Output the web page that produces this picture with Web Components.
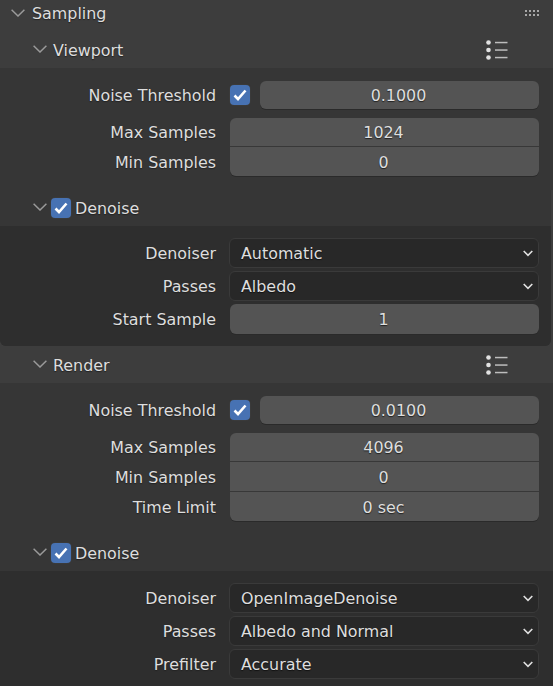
<!DOCTYPE html>
<html>
<head>
<meta charset="utf-8">
<title>Sampling</title>
<style>
  html, body {
    margin: 0;
    height: 686px;
    overflow: hidden;
    background: #3d3d3d;
    font-family: "DejaVu Sans", sans-serif;
    font-size: 15.9px;
    color: #dedede;
  }
</style>
</head>
<body>
<sampling-panel></sampling-panel>

<script>
const chevron = `<svg width="14" height="8" viewBox="0 0 14 8" fill="none" stroke="#9a9a9a" stroke-width="1.5"><path d="M.6 .8 L7 7 L13.4 .8"/></svg>`

class BlCheck extends HTMLElement {
  constructor() {
    super()
    this.attachShadow({ mode: 'open' })
    this.shadowRoot.innerHTML = `
      <style>
        :host {
          width: 20px;
          height: 20px;
          display: flex;
          align-items: center;
          justify-content: center;
          flex: none;
          background: #4772b3;
          border-radius: 4px;
          box-shadow: 0 0 0 1px #3a3a3a;
        }
      </style>
      <svg width="14" height="12" viewBox="0 0 14 12" fill="none" stroke="#fff" stroke-width="2.6">
        <path d="M1.5 6.5 L5 10 L12.5 1.5"/>
      </svg>
    `
  }
}
customElements.define('bl-check', BlCheck)

class BlHeader extends HTMLElement {
  constructor() {
    super()
    this.attachShadow({ mode: 'open' })
  }

  connectedCallback() {
    let checked = this.hasAttribute('checked')
    let list = this.hasAttribute('presets')
    this.shadowRoot.innerHTML = `
      <style>
        :host {
          display: flex;
          align-items: center;
          height: 36px;
          padding-left: 33px;
          padding-right: 45px;
          box-sizing: border-box;
        }
        span { text-shadow: 0 1px 1px #222; }
        .arrow { width: 20px; display: flex; flex: none; margin-top: -3px; }
        .check { margin-left: -2px; margin-right: 4px; display: flex; }
        .list { margin-left: auto; display: flex; }
      </style>
      <div class="arrow">${chevron}</div>
      ${checked ? '<div class="check"><bl-check></bl-check></div>' : ''}
      <span><slot></slot></span>
      ${list ? `<div class="list">
        <svg width="22" height="22" viewBox="0 0 22 22">
          <g fill="#e2e2e2"><circle cx="2.5" cy="3.5" r="2.3"/><circle cx="2.5" cy="11" r="2.3"/><circle cx="2.5" cy="18.5" r="2.3"/></g>
          <g fill="#bdbdbd"><rect x="9" y="2.8" width="12.5" height="1.5"/><rect x="9" y="10.3" width="12.5" height="1.5"/><rect x="9" y="17.8" width="12.5" height="1.5"/></g>
        </svg>
      </div>` : ''}
    `
  }
}
customElements.define('bl-header', BlHeader)

class BlRow extends HTMLElement {
  constructor() {
    super()
    this.attachShadow({ mode: 'open' })
  }

  connectedCallback() {
    this.shadowRoot.innerHTML = `
      <style>
        :host {
          display: grid;
          grid-template-columns: 216px 1fr;
          column-gap: 14px;
          align-items: center;
        }
        :host([lower]) label { padding-top: 2px; }
        label { text-align: right; text-shadow: 0 1px 1px #222; white-space: nowrap; }
        .value { display: flex; align-items: center; gap: 10px; min-width: 0; }
      </style>
      <label>${this.getAttribute('label')}</label>
      <div class="value"><slot></slot></div>
    `
  }
}
customElements.define('bl-row', BlRow)

class BlField extends HTMLElement {
  constructor() {
    super()
    this.attachShadow({ mode: 'open' })
    this.shadowRoot.innerHTML = `
      <style>
        :host {
          flex: 1;
          height: 29px;
          box-sizing: border-box;
          padding-right: 2px;
          display: flex;
          align-items: center;
          justify-content: center;
          background: #545454;
          border-radius: 6px;
          box-shadow: 0 1px 0 #2a2a2a;
          text-shadow: 0 1px 1px #222;
        }
        :host([pos=top]) { border-radius: 6px 6px 0 0; box-shadow: none; }
        :host([pos=bottom]) { border-radius: 0 0 6px 6px; border-top: 1px solid #383838; padding-top: 1px; }
        :host([pos=mid]) { border-radius: 0; border-top: 1px solid #383838; padding-top: 1px; box-shadow: none; }
      </style>
      <slot></slot>
    `
  }
}
customElements.define('bl-field', BlField)

class BlSelect extends HTMLElement {
  constructor() {
    super()
    this.attachShadow({ mode: 'open' })
    this.shadowRoot.innerHTML = `
      <style>
        :host {
          flex: 1;
          height: 30px;
          box-sizing: border-box;
          margin-left: -1px;
          padding: 0 5px 0 11px;
          display: flex;
          align-items: center;
          justify-content: space-between;
          background: #282828;
          border: 1px solid #3a3a3a;
          border-radius: 6px;
          text-shadow: 0 1px 1px #111;
        }
      </style>
      <slot></slot>
      <svg width="10" height="7" viewBox="0 0 10 7" fill="none" stroke="#e0e0e0" stroke-width="1.6"><path d="M.7 1 L5 5.3 L9.3 1"/></svg>
    `
  }
}
customElements.define('bl-select', BlSelect)

class BlBody extends HTMLElement {
  constructor() {
    super()
    this.attachShadow({ mode: 'open' })
    this.shadowRoot.innerHTML = `
      <style>
        :host { display: block; padding: 13px 14px 0 0; box-sizing: border-box; }
        :host([sub]) { background: #2e2e2e; padding-top: 12px; padding-bottom: 12px; }
        .rows { display: flex; flex-direction: column; }
      </style>
      <div class="rows"><slot></slot></div>
    `
  }
}
customElements.define('bl-body', BlBody)

class SamplingPanel extends HTMLElement {
  constructor() {
    super()
    this.attachShadow({ mode: 'open' })
    let denoise = (html, inset) => `
      <bl-header checked>Denoise</bl-header>
      <bl-body sub style="${inset ? 'padding-right:12px' : ''}">${html}</bl-body>
    `
    let select = (label, value) =>
      `<bl-row label="${label}" style="margin-bottom:3px"><bl-select>${value}</bl-select></bl-row>`
    let numbers = (lines) => lines.map(([label, value], i) => {
      let pos = i === 0 ? 'top' : i === lines.length - 1 ? 'bottom' : 'mid'
      return `<bl-row label="${label}" ${i ? 'lower' : ''}><bl-field pos="${pos}" style="height:${i === 0 ? 28 : 30}px">${value}</bl-field></bl-row>`
    }).join('')
    let noise = (value) =>
      `<bl-row label="Noise Threshold" style="margin-bottom:9px"><bl-check></bl-check><bl-field style="height:28px">${value}</bl-field></bl-row>`

    this.shadowRoot.innerHTML = `
      <style>
        :host { display: block; width: 553px; height: 686px; overflow: hidden; background: #3d3d3d; }
        .title {
          height: 32px;
          display: flex;
          align-items: center;
          padding: 0 14px 6px 11px;
          box-sizing: border-box;
          text-shadow: 0 1px 1px #222;
        }
        .title .arrow { width: 21px; display: flex; }
        .title .grip { margin-left: auto; }
        .section { background: #363636; padding-bottom: 14px; }
        .block { border-radius: 0 0 6px 6px; overflow: hidden; width: 551px; }
        .sub-wrap { background: #363636; }
      </style>
      <div class="title">
        <div class="arrow">${chevron}</div>
        <span>Sampling</span>
        <svg class="grip" width="14" height="6" viewBox="0 0 14 6" fill="#a8a8a8">
          <rect x="0" y="0" width="2" height="2"/><rect x="4" y="0" width="2" height="2"/><rect x="8" y="0" width="2" height="2"/><rect x="12" y="0" width="2" height="2"/>
          <rect x="0" y="4" width="2" height="2"/><rect x="4" y="4" width="2" height="2"/><rect x="8" y="4" width="2" height="2"/><rect x="12" y="4" width="2" height="2"/>
        </svg>
      </div>

      <bl-header presets>Viewport</bl-header>
      <bl-body class="section">
        ${noise('0.1000')}
        ${numbers([['Max Samples', '1024'], ['Min Samples', '0']])}
      </bl-body>
      <div class="block">
        <div class="sub-wrap">
          ${denoise(select('Denoiser', 'Automatic') + select('Passes', 'Albedo') +
            `<bl-row label="Start Sample"><bl-field style="height:30px">1</bl-field></bl-row>`, true)}
        </div>
      </div>

      <bl-header presets style="height:37px;padding-top:1px">Render</bl-header>
      <bl-body class="section">
        ${noise('0.0100')}
        ${numbers([['Max Samples', '4096'], ['Min Samples', '0'], ['Time Limit', '0 sec']])}
      </bl-body>
      <div class="sub-wrap">
        ${denoise(select('Denoiser', 'OpenImageDenoise') + select('Passes', 'Albedo and Normal') + select('Prefilter', 'Accurate'))}
      </div>
    `
  }
}
customElements.define('sampling-panel', SamplingPanel)
</script>
</body>
</html>
